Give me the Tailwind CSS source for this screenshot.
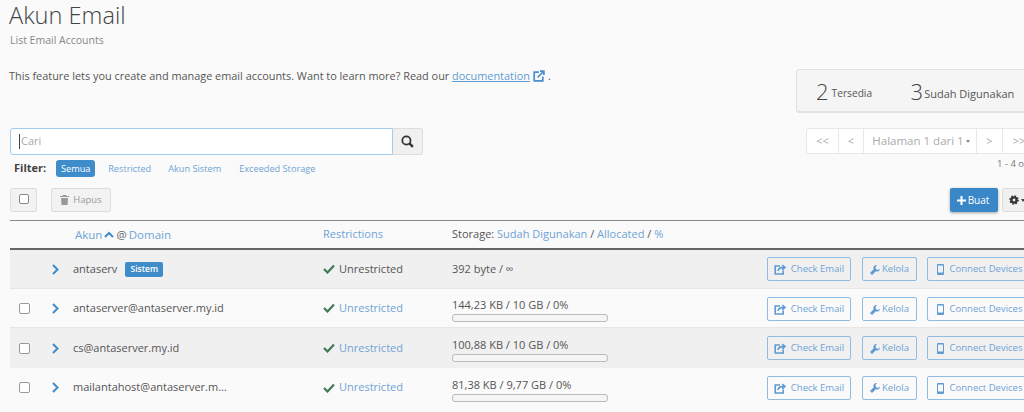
<!DOCTYPE html>
<html>
<head>
<meta charset="utf-8">
<script src="https://cdn.jsdelivr.net/npm/@tailwindcss/browser@4"></script>
</head>
<body class="bg-[#fafafa] overflow-hidden">
<div class="w-[1024px] h-[412px] overflow-hidden font-['Open_Sans',sans-serif] text-[#555]">
  <div class="w-[1070px] pl-[10px]">
    <div class="flex justify-between h-[128px]">
      <div class="min-w-0">
        <h1 class="text-[23.6px] leading-[30px] font-light text-[#444] -ml-[1px]">Akun Email</h1>
        <p class="text-[10.5px] leading-[15px] text-[#888] mt-[3px]">List Email Accounts</p>
        <p class="text-[10.9px] leading-[16px] text-[#555] mt-[20px] -ml-[1px] flex items-center whitespace-pre">This feature lets you create and manage email accounts. Want to learn more? Read our <span class="text-[#5f9bd3] underline">documentation</span><svg class="w-[12px] h-[12px] ml-[3px] mr-[3px] text-[#4a90d0]" viewBox="0 0 12 12" fill="none" stroke="currentColor" stroke-width="1.700"><path d="M6 2.200H1.200v8.600h8.600V6.400"/><path d="M4.500 7.500 10.600 1.400M7 1.100h3.900V5" /></svg>.</p>
      </div>
      <div class="w-[274px] mr-[0px] h-[43px] mt-[69px] bg-[#f5f5f5] border border-[#e3e3e3] rounded-[3px] shadow-[0_1px_1px_rgba(0,0,0,0.1)] flex items-center pl-[19px] text-[#555]">
        <span class="text-[22px] leading-none font-light text-[#444] mr-[3px]">2</span><span class="text-[10.2px] mt-[7px] w-[79px]">Tersedia</span>
        <span class="text-[22px] leading-none font-light text-[#444] mr-[1px]">3</span><span class="text-[11px] mt-[7px]">Sudah Digunakan</span>
      </div>
    </div>

    <div class="flex justify-between h-[60px]">
      <div>
        <div class="flex h-[27px] w-[413px]">
          <div class="w-[383px] bg-white border border-[#a3cdf0] rounded-l-[3px] flex items-center pl-[8px] text-[11px] text-[#aaa]"><span class="w-px h-[15px] bg-[#444] mr-px"></span>Cari</div>
          <div class="w-[30px] bg-[#f0f0f0] border border-[#ddd] border-l-0 rounded-r-[3px] flex items-center justify-center">
            <svg class="w-[13px] h-[13px]" viewBox="0 0 12 12" fill="none" stroke="#333" stroke-width="1.600"><circle cx="5" cy="5" r="3.800"/><path d="M7.800 7.800 11 11" stroke-width="2.200"/></svg>
          </div>
        </div>
        <div class="flex items-center h-[17px] mt-[5px] text-[9.2px] text-[#6fa3d6] pl-[4px]">
          <span class="text-[11px] font-bold text-[#444] mr-[10px]">Filter:</span>
          <span class="bg-[#3f8ccb] text-white rounded-[3px] h-[17px] w-[39px] flex items-center justify-center mr-[13px]">Semua</span>
          <span class="mr-[17px]">Restricted</span>
          <span class="mr-[18px]">Akun Sistem</span>
          <span>Exceeded Storage</span>
        </div>
      </div>
      <div class="w-[264px] mr-[0px] pl-[0px]">
        <div class="flex h-[26px] w-[230px] bg-white border border-[#e8e8e8] rounded-[3px] text-[11px] text-[#aaa]">
          <span class="w-[32px] border-r border-[#e8e8e8] flex items-center justify-center">&lt;&lt;</span>
          <span class="w-[25px] border-r border-[#e8e8e8] flex items-center justify-center">&lt;</span>
          <span class="w-[113px] border-r border-[#e8e8e8] flex items-center justify-center text-[11.5px] pl-[2px]">Halaman 1 dari 1<span class="ml-[2px] border-x-[2.5px] border-t-[3px] border-x-transparent border-t-[#888]"></span></span>
          <span class="w-[26px] border-r border-[#e8e8e8] flex items-center justify-center">&gt;</span>
          <span class="w-[32px] flex items-center justify-center">&gt;&gt;</span>
        </div>
        <p class="text-[9.5px] leading-[14px] text-[#777] mt-[3px] ml-[191px] whitespace-nowrap">1 - 4 of 4</p>
      </div>
    </div>

    <div class="flex justify-between h-[32px] pr-[38px]">
      <div class="flex items-start gap-[14px]">
        <div class="w-[27px] h-[24px] bg-[#f2f2f2] border border-[#ddd] rounded-[2px] flex items-center justify-center">
          <span class="w-[10px] h-[10px] bg-white border border-[#888] rounded-[2px] -mt-[3px]"></span>
        </div>
        <div class="w-[60px] h-[24px] bg-[#f2f2f2] border border-[#ddd] rounded-[2px] flex items-center justify-center gap-[4px] text-[9.5px] text-[#999]">
          <svg class="w-[9px] h-[10px]" viewBox="0 0 9 10" fill="#999"><path d="M3 0h3l.6 1H9v1H0V1h2.400zM1 3h7l-.5 7H1.500z"/></svg>Hapus
        </div>
      </div>
      <div class="flex items-start gap-[4px]">
        <div class="w-[48px] h-[24px] bg-[#3a87c8] rounded-[2px] shadow-[0_1px_3px_rgba(0,0,0,0.35)] flex items-center justify-center gap-[2px] text-white text-[10px] pr-[2px]">
          <svg class="w-[9px] h-[9px]" viewBox="0 0 9 9" fill="none" stroke="white" stroke-width="2"><path d="M4.500 0v9M0 4.500h9"/></svg>Buat
        </div>
        <div class="w-[30px] h-[24px] bg-[#f0f0f0] border border-[#ddd] rounded-[2px] flex items-center justify-center gap-[2px]">
          <svg class="w-[10px] h-[10px]" viewBox="0 0 10 10" fill="none" stroke="#333" stroke-width="2.400"><circle cx="5" cy="5" r="2.600"/><circle cx="5" cy="5" r="4" stroke-dasharray="1.500 1.640" stroke-width="1.600"/></svg>
          <span class="border-x-[2.5px] border-t-[3px] border-x-transparent border-t-[#444]"></span>
        </div>
      </div>
    </div>

    <div class="grid grid-cols-[63px_250px_129px_315px_1fr] h-[30px] items-center border-t-[1px] border-t-[#888] border-b-[2px] border-b-[#666] text-[11px] text-[#6fa3d6]">
      <span></span>
      <span class="pl-[2px] flex items-center gap-[2px] text-[11.5px]">Akun <svg class="w-[10px] h-[7px]" viewBox="0 0 10 7" fill="none" stroke="#3f8ccb" stroke-width="2"><path d="M1 6l4-4 4 4"/></svg> <span class="text-[#666]">@</span> Domain</span>
      <span>Restrictions</span>
      <span><span class="text-[#555]">Storage:</span> Sudah Digunakan <span class="text-[#555]">/</span> Allocated <span class="text-[#555]">/</span> %</span>
      <span></span>
    </div>

    <div class="grid grid-cols-[63px_250px_129px_315px_1fr] h-[39px] items-center bg-[#f0f0f0] border-b border-[#e6e6e6] text-[11px]">
      <span class="flex items-center pl-[42px]"><svg class="w-[7px] h-[11px]" viewBox="0 0 7 11" fill="none" stroke="#3f8ccb" stroke-width="2"><path d="M1 1l4.500 4.500L1 10"/></svg></span>
      <span class="flex items-center gap-[8px]">antaserv <span class="bg-[#3f8ccb] text-white text-[8.5px] font-semibold rounded-[2px] w-[38px] h-[15px] flex items-center justify-center">Sistem</span></span>
      <span class="flex items-center gap-[4px]"><svg class="w-[12px] h-[10px]" viewBox="0 0 12 10" fill="none" stroke="#3f7a55" stroke-width="2.200"><path d="M1 5l3.500 3.500L11 1.500"/></svg>Unrestricted</span>
      <span>392 byte / ∞</span>
      <div class="flex text-[9.5px] text-[#6fa3d6]">
        <span class="w-[84px] h-[24px] mr-[11px] pt-[1px] border border-[#8fbce3] rounded-[2px] flex items-center justify-center gap-[5px]"><svg class="w-[12px] h-[11px]" viewBox="0 0 12 11" fill="none" stroke="#5f9bd3" stroke-width="1.600"><path d="M6 2H1.200v8h8V6.500"/><path d="M4 7c.4-2.700 2.500-3.600 6-3.600M8.300 1l2.600 2.400-2.600 2.400" /></svg>Check Email</span>
        <span class="w-[55px] h-[24px] mr-[10px] pt-[1px] border border-[#8fbce3] rounded-[2px] flex items-center justify-center gap-[2px]"><svg class="w-[10px] h-[10px]" viewBox="0 0 10 10" fill="#5f9bd3"><path d="M6.500 0a3 3 0 0 0-2.800 4.200L0 8l2 2 3.800-3.700A3 3 0 0 0 10 3.500L8.400 5 6 4.200 5.500 1.800 7 .3z"/></svg>Kelola</span>
        <span class="w-[103px] h-[24px] pt-[1px] pl-[2px] border border-[#8fbce3] rounded-[2px] flex items-center justify-center gap-[6px]"><svg class="w-[7px] h-[11px]" viewBox="0 0 7 11" fill="#5f9bd3"><path fill-rule="evenodd" d="M1 0h5a1 1 0 0 1 1 1v9a1 1 0 0 1-1 1H1a1 1 0 0 1-1-1V1a1 1 0 0 1 1-1zM1 1.500V8.500h5V1.500z"/></svg>Connect Devices</span>
      </div>
    </div>

    <div class="grid grid-cols-[63px_250px_129px_315px_1fr] h-[39px] items-center border-b border-[#e6e6e6] text-[11px]">
      <span class="flex items-center pl-[9px] gap-[22px]"><span class="w-[11px] h-[11px] bg-white border border-[#999] rounded-[2px]"></span><svg class="w-[7px] h-[11px]" viewBox="0 0 7 11" fill="none" stroke="#3f8ccb" stroke-width="2"><path d="M1 1l4.500 4.500L1 10"/></svg></span>
      <span>antaserver@antaserver.my.id</span>
      <span class="flex items-center gap-[4px] text-[#6fa3d6]"><svg class="w-[12px] h-[10px]" viewBox="0 0 12 10" fill="none" stroke="#3f7a55" stroke-width="2.200"><path d="M1 5l3.500 3.500L11 1.500"/></svg>Unrestricted</span>
      <div class="w-[156px] mt-[4px]"><p class="leading-[14px] whitespace-nowrap">144,23 KB / 10 GB / 0%</p><div class="h-[8px] mt-[2px] bg-[#f5f5f5] border border-[#bbb] rounded-[3px]"></div></div>
      <div class="flex text-[9.5px] text-[#6fa3d6] mt-[2px]">
        <span class="w-[84px] h-[24px] mr-[11px] pt-[1px] border border-[#8fbce3] rounded-[2px] flex items-center justify-center gap-[5px]"><svg class="w-[12px] h-[11px]" viewBox="0 0 12 11" fill="none" stroke="#5f9bd3" stroke-width="1.600"><path d="M6 2H1.200v8h8V6.500"/><path d="M4 7c.4-2.700 2.500-3.600 6-3.600M8.300 1l2.600 2.400-2.600 2.400" /></svg>Check Email</span>
        <span class="w-[55px] h-[24px] mr-[10px] pt-[1px] border border-[#8fbce3] rounded-[2px] flex items-center justify-center gap-[2px]"><svg class="w-[10px] h-[10px]" viewBox="0 0 10 10" fill="#5f9bd3"><path d="M6.500 0a3 3 0 0 0-2.800 4.200L0 8l2 2 3.800-3.700A3 3 0 0 0 10 3.500L8.400 5 6 4.200 5.500 1.800 7 .3z"/></svg>Kelola</span>
        <span class="w-[103px] h-[24px] pt-[1px] pl-[2px] border border-[#8fbce3] rounded-[2px] flex items-center justify-center gap-[6px]"><svg class="w-[7px] h-[11px]" viewBox="0 0 7 11" fill="#5f9bd3"><path fill-rule="evenodd" d="M1 0h5a1 1 0 0 1 1 1v9a1 1 0 0 1-1 1H1a1 1 0 0 1-1-1V1a1 1 0 0 1 1-1zM1 1.500V8.500h5V1.500z"/></svg>Connect Devices</span>
      </div>
    </div>

    <div class="grid grid-cols-[63px_250px_129px_315px_1fr] h-[40px] items-center bg-[#f0f0f0] text-[11px]">
      <span class="flex items-center pl-[9px] gap-[22px]"><span class="w-[11px] h-[11px] bg-white border border-[#999] rounded-[2px]"></span><svg class="w-[7px] h-[11px]" viewBox="0 0 7 11" fill="none" stroke="#3f8ccb" stroke-width="2"><path d="M1 1l4.500 4.500L1 10"/></svg></span>
      <span>cs@antaserver.my.id</span>
      <span class="flex items-center gap-[4px] text-[#6fa3d6]"><svg class="w-[12px] h-[10px]" viewBox="0 0 12 10" fill="none" stroke="#3f7a55" stroke-width="2.200"><path d="M1 5l3.500 3.500L11 1.500"/></svg>Unrestricted</span>
      <div class="w-[156px] mt-[4px]"><p class="leading-[14px] whitespace-nowrap">100,88 KB / 10 GB / 0%</p><div class="h-[8px] mt-[2px] bg-[#f5f5f5] border border-[#bbb] rounded-[3px]"></div></div>
      <div class="flex text-[9.5px] text-[#6fa3d6]">
        <span class="w-[84px] h-[24px] mr-[11px] pt-[1px] border border-[#8fbce3] rounded-[2px] flex items-center justify-center gap-[5px]"><svg class="w-[12px] h-[11px]" viewBox="0 0 12 11" fill="none" stroke="#5f9bd3" stroke-width="1.600"><path d="M6 2H1.200v8h8V6.500"/><path d="M4 7c.4-2.700 2.500-3.600 6-3.600M8.300 1l2.600 2.400-2.600 2.400" /></svg>Check Email</span>
        <span class="w-[55px] h-[24px] mr-[10px] pt-[1px] border border-[#8fbce3] rounded-[2px] flex items-center justify-center gap-[2px]"><svg class="w-[10px] h-[10px]" viewBox="0 0 10 10" fill="#5f9bd3"><path d="M6.500 0a3 3 0 0 0-2.800 4.200L0 8l2 2 3.800-3.700A3 3 0 0 0 10 3.500L8.400 5 6 4.200 5.500 1.800 7 .3z"/></svg>Kelola</span>
        <span class="w-[103px] h-[24px] pt-[1px] pl-[2px] border border-[#8fbce3] rounded-[2px] flex items-center justify-center gap-[6px]"><svg class="w-[7px] h-[11px]" viewBox="0 0 7 11" fill="#5f9bd3"><path fill-rule="evenodd" d="M1 0h5a1 1 0 0 1 1 1v9a1 1 0 0 1-1 1H1a1 1 0 0 1-1-1V1a1 1 0 0 1 1-1zM1 1.500V8.500h5V1.500z"/></svg>Connect Devices</span>
      </div>
    </div>

    <div class="grid grid-cols-[63px_250px_129px_315px_1fr] h-[39px] items-center text-[11px]">
      <span class="flex items-center pl-[9px] gap-[22px]"><span class="w-[11px] h-[11px] bg-white border border-[#999] rounded-[2px]"></span><svg class="w-[7px] h-[11px]" viewBox="0 0 7 11" fill="none" stroke="#3f8ccb" stroke-width="2"><path d="M1 1l4.500 4.500L1 10"/></svg></span>
      <span>mailantahost@antaserver.m...</span>
      <span class="flex items-center gap-[4px] text-[#6fa3d6]"><svg class="w-[12px] h-[10px]" viewBox="0 0 12 10" fill="none" stroke="#3f7a55" stroke-width="2.200"><path d="M1 5l3.500 3.500L11 1.500"/></svg>Unrestricted</span>
      <div class="w-[156px] mt-[4px]"><p class="leading-[14px] whitespace-nowrap">81,38 KB / 9,77 GB / 0%</p><div class="h-[8px] mt-[2px] bg-[#f5f5f5] border border-[#bbb] rounded-[3px]"></div></div>
      <div class="flex text-[9.5px] text-[#6fa3d6]">
        <span class="w-[84px] h-[24px] mr-[11px] pt-[1px] border border-[#8fbce3] rounded-[2px] flex items-center justify-center gap-[5px]"><svg class="w-[12px] h-[11px]" viewBox="0 0 12 11" fill="none" stroke="#5f9bd3" stroke-width="1.600"><path d="M6 2H1.200v8h8V6.500"/><path d="M4 7c.4-2.700 2.500-3.600 6-3.600M8.300 1l2.600 2.400-2.600 2.400" /></svg>Check Email</span>
        <span class="w-[55px] h-[24px] mr-[10px] pt-[1px] border border-[#8fbce3] rounded-[2px] flex items-center justify-center gap-[2px]"><svg class="w-[10px] h-[10px]" viewBox="0 0 10 10" fill="#5f9bd3"><path d="M6.500 0a3 3 0 0 0-2.800 4.200L0 8l2 2 3.800-3.700A3 3 0 0 0 10 3.500L8.400 5 6 4.200 5.500 1.800 7 .3z"/></svg>Kelola</span>
        <span class="w-[103px] h-[24px] pt-[1px] pl-[2px] border border-[#8fbce3] rounded-[2px] flex items-center justify-center gap-[6px]"><svg class="w-[7px] h-[11px]" viewBox="0 0 7 11" fill="#5f9bd3"><path fill-rule="evenodd" d="M1 0h5a1 1 0 0 1 1 1v9a1 1 0 0 1-1 1H1a1 1 0 0 1-1-1V1a1 1 0 0 1 1-1zM1 1.500V8.500h5V1.500z"/></svg>Connect Devices</span>
      </div>
    </div>
  </div>
</div>
</body>
</html>
